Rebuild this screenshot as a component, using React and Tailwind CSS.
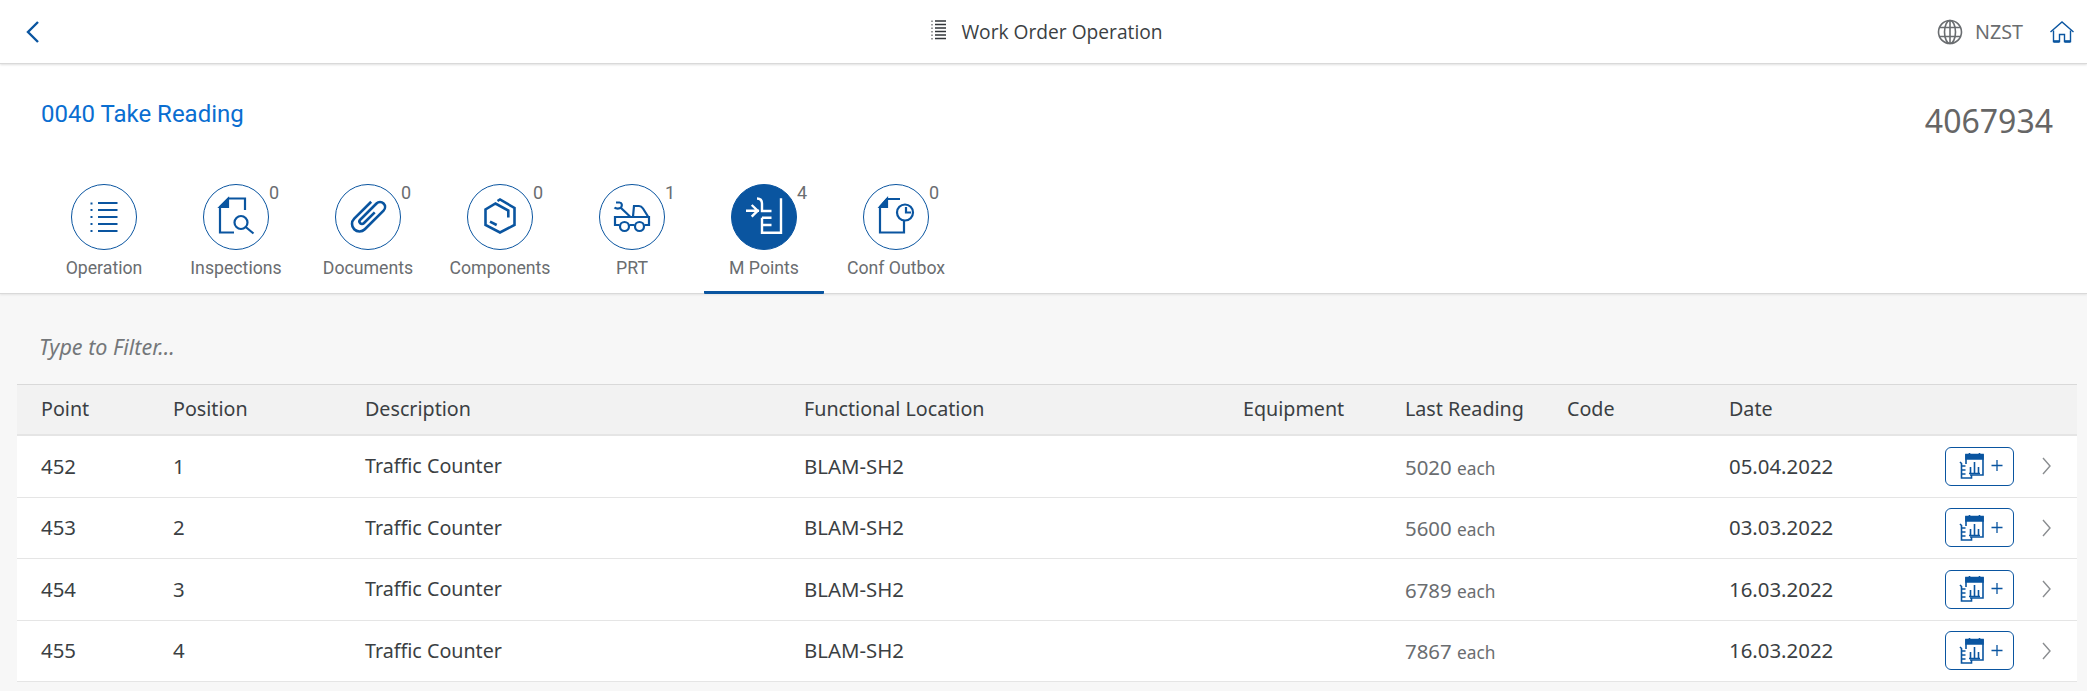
import React from "react";

const icons = {
  list: (
    <g fill="none" strokeWidth="2">
      <path d="M27 19h19.500M27 26h19.500M27 33h19.500M27 40h19.500M27 47h19.500" />
      <path d="M20.500 18.500v2M20.500 25v2M20.500 32v2M20.500 39v2M20.500 46v2" />
    </g>
  ),
  inspect: (
    <g fill="none" strokeWidth="2.200">
      <path d="M31 48.500H17V23l8.500-8.500H42V26" />
      <path d="M17 23l8-8v8z" fill="currentColor" />
      <circle cx="38" cy="38.500" r="6.500" />
      <path d="M42.700 43L50.500 49.500" />
    </g>
  ),
  clip: (
    <g fill="none" strokeWidth="2.600" transform="translate(33 31.500) rotate(45)">
      <path d="M-7.500 -12V12a7.500 7.500 0 0 0 15 0V-14.500a5 5 0 0 0 -10 0V8.500a2.500 2.500 0 0 0 5 0V-7" />
    </g>
  ),
  box: (
    <g fill="none" strokeWidth="2.600">
      <path d="M18.500 28V41L33 48.500 47.500 41V24L33 15.500l-2.500 1.500" />
      <path d="M18.500 28v-2.500L28.500 19.500 41.300 26.500v7" />
      <path d="M23 37.700L29.700 41" />
    </g>
  ),
  truck: (
    <g fill="none" strokeWidth="2.200">
      <path d="M20.500 41h-4.500V33h34v8H45.500M30.500 41h5" />
      <circle cx="25.500" cy="42.500" r="4.500" />
      <circle cx="40.500" cy="42.500" r="4.500" />
      <path d="M34 32.500l1-10.500h5c2 0 3 1 4 2.500l5 8" />
      <path d="M31 32.500L21.500 23.500" />
      <path d="M17 18.500h3.500c2.500 0 3 3 1.500 5-1.500 1.500-5 1.500-6.500 0" />
    </g>
  ),
  ruler: (
    <g fill="none" strokeWidth="2.400" stroke="#fff">
      <path d="M15 26.700h13M20.700 21l6 5.700-6 6" />
      <path d="M50 14.300V48.700H31V33.700" />
      <path d="M26 14.500c3 0 5 1.500 5 5V27h9.500M31 33.700h9.500M31 41h9.500" />
    </g>
  ),
  outbox: (
    <g fill="none" strokeWidth="2.200">
      <path d="M41 37v11.500H17V23l7-8h13" />
      <path d="M17 23l7-8v8z" fill="currentColor" />
      <circle cx="42" cy="28.500" r="8" />
      <path d="M43 23v5.500h5" />
    </g>
  ),
};

const tabs = [
  ["Operation", "list", ""],
  ["Inspections", "inspect", "0"],
  ["Documents", "clip", "0"],
  ["Components", "box", "0"],
  ["PRT", "truck", "1"],
  ["M Points", "ruler", "4"],
  ["Conf Outbox", "outbox", "0"],
];

const rows = [
  ["452", "1", "5020", "05.04.2022"],
  ["453", "2", "5600", "03.03.2022"],
  ["454", "3", "6789", "16.03.2022"],
  ["455", "4", "7867", "16.03.2022"],
];

const grid = "grid grid-cols-[132px_192px_439px_439px_162px_162px_162px_1fr] items-center";

function Tab({ label, icon, count, active }) {
  return (
    <div className={`relative w-[120px] h-[110px] flex flex-col items-center ${active ? "border-b-[3px] border-[#0a55a0] rounded-b-[1px]" : ""}`}>
      <div className={`w-[66px] h-[66px] rounded-full border-[1.5px] border-[#0a55a0] text-[#0a55a0] ${active ? "bg-[#0a55a0]" : "bg-white"}`}>
        <svg viewBox="0 0 66 66" className="w-[66px] h-[66px] -m-[1.5px] overflow-visible max-w-none" stroke="currentColor">
          {icons[icon]}
        </svg>
      </div>
      <div className="mt-[7px] text-[17.7px] leading-[22px] text-[#6a6d70] whitespace-nowrap" style={{ fontFamily: "Roboto, sans-serif" }}>{label}</div>
      {count && <span className="absolute left-[93px] top-[-2px] text-[18px] leading-[22px] text-[#6a6d70]" style={{ fontFamily: "Roboto, sans-serif" }}>{count}</span>}
    </div>
  );
}

function AddIcon() {
  return (
    <svg width="46" height="26" viewBox="0 0 46 26" fill="none" stroke="#0a55a0" strokeWidth="1.600">
      <path d="M3 9l1.500 1.500V25h10v-3" />
      <path d="M4.500 13h4M4.500 17h4M4.500 21h4" />
      <path d="M9 11V2h17v20H13" />
      <path d="M9 1.500h17V6H9z" fill="#0a55a0" />
      <path d="M12.500 0v2M22.500 0v2" />
      <path d="M13.500 20v-6M17.500 20V9M21.500 20v-6M12 20.500h11" />
      <path strokeWidth="1.300" d="M34.500 12.500h11M40 7v11" />
    </svg>
  );
}

const valueText = "text-[20.4px]";

export default function App() {
  return (
    <div className="w-[2087px] h-[691px] overflow-hidden bg-[#f7f7f7] text-[#3b3f43]" style={{ fontFamily: '"Noto Sans", sans-serif' }}>
      <header className="h-[64px] bg-white border-b border-[#d9d9d9] shadow-[0_1px_2px_rgba(0,0,0,0.12)] relative z-10 flex items-center">
        <div className="flex-1 pl-[26px]">
          <svg width="13" height="22" viewBox="0 0 13 22" fill="none" stroke="#0a55a0" strokeWidth="2.400">
            <path d="M12 1L2 11l10 10" />
          </svg>
        </div>
        <div className="flex items-center pr-[6px]" style={{ fontFamily: '"Open Sans", sans-serif' }}>
          <svg width="16" height="20" viewBox="0 0 16 20" fill="none" stroke="#32363a" className="mr-[14px] -mt-[4px]">
            <path strokeWidth="1.500" d="M4 1h11M4 4.500h11M4 8h11M4 11.500h11M4 15h11M4 18.500h11" />
            <path strokeWidth="1" d="M1 .500v1.500M1 4v1.500M1 7.500V9M1 11v1.500M1 14.500V16M1 18v1.500" />
          </svg>
          <span className="text-[19.2px] leading-[24px]">Work Order Operation</span>
        </div>
        <div className="flex-1 flex items-center justify-end pr-[13px]">
          <svg width="26" height="26" viewBox="0 0 26 26" fill="none" stroke="#6a6d70" strokeWidth="1.600" className="mr-[12px]">
            <circle cx="13" cy="13" r="11.500" />
            <ellipse cx="13" cy="13" rx="5.500" ry="11.500" />
            <path d="M13 1.500v23M2.500 8.500h21M2.500 17.500h21" />
          </svg>
          <span className="text-[19.7px] leading-[24px] text-[#6a6d70] mr-[27px]">NZST</span>
          <svg width="24" height="22" viewBox="0 0 24 22" fill="none" stroke="#0a55a0" strokeWidth="1.400">
            <path d="M.500 11L12 1l11.500 10" />
            <path d="M3.500 9.500V20.500H9.500V13.500h5v7h6V9.500" />
            <path d="M3.500 20.500h6M14.500 20.500h6" strokeWidth="2.400" />
          </svg>
        </div>
      </header>

      <section className="h-[230px] bg-white border-b border-[#d9d9d9] shadow-[0_1px_2px_rgba(0,0,0,0.08)] relative">
        <div className="flex justify-between items-start pl-[41px] pr-[34px] h-[120px]">
          <h1 className="mt-[34px] text-[24px] leading-[32px] font-normal text-[#0a6ed1]" style={{ fontFamily: "Roboto, sans-serif" }}>0040 Take Reading</h1>
          <div className="mt-[35px] text-[32px] leading-[44px] text-[#666]">4067934</div>
        </div>
        <nav className="flex gap-[12px] pl-[44px]">
          {tabs.map(([l, i, c]) => (
            <Tab key={l} label={l} icon={i} count={c} active={l === "M Points"} />
          ))}
        </nav>
      </section>

      <div className="h-[90px] pl-[39px] flex items-center pt-[16px]">
        <span className="text-[21.5px] italic text-[#74777a]">Type to Filter...</span>
      </div>

      <div className="ml-[17px] w-[2060px]">
        <div className={`${grid} h-[52px] pb-[2px] bg-[#f2f2f2] border-t border-[#d9d9d9] border-b-2 border-b-[#e5e5e5] text-[19.7px]`}>
          {["Point", "Position", "Description", "Functional Location", "Equipment", "Last Reading", "Code", "Date"].map((h) => (
            <div key={h} className="pl-[24px] whitespace-nowrap">{h}</div>
          ))}
        </div>
        {rows.map(([pt, pos, val, date]) => (
          <div key={pt} className={`${grid} h-[61.500px] bg-white border-b border-[#e5e5e5] text-[19.7px]`}>
            <div className={`pl-[24px] ${valueText}`}>{pt}</div>
            <div className={`pl-[24px] ${valueText}`}>{pos}</div>
            <div className="pl-[24px]">Traffic Counter</div>
            <div className={`pl-[24px] ${valueText}`}>BLAM-SH2</div>
            <div />
            <div className={`pl-[24px] text-[#6a6d70] pt-[2px] whitespace-nowrap ${valueText}`}>
              {val} <span className="text-[17.3px]">each</span>
            </div>
            <div />
            <div className="flex items-center justify-between pl-[24px]">
              <span className={valueText}>{date}</span>
              <div className="flex items-center mr-[25px]">
                <button className="w-[69px] h-[39px] border-[1.500px] border-[#0a55a0] rounded-[6px] flex items-center justify-center bg-white">
                  <AddIcon />
                </button>
                <svg width="10" height="18" viewBox="0 0 10 18" fill="none" stroke="#8a8d90" strokeWidth="1.400" className="ml-[28px]">
                  <path d="M1 1l7 8-7 8" />
                </svg>
              </div>
            </div>
          </div>
        ))}
      </div>
    </div>
  );
}
